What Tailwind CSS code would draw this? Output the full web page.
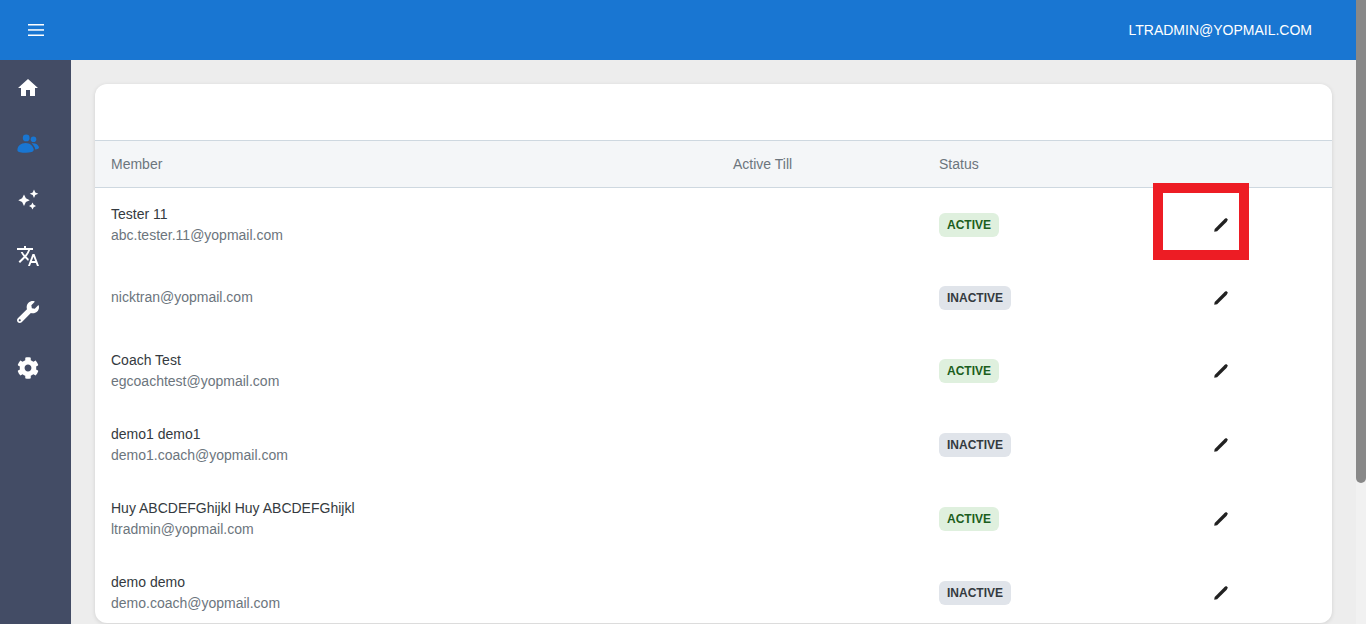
<!doctype html>
<html>
<head>
<meta charset="utf-8">
<script src="https://cdn.jsdelivr.net/npm/@tailwindcss/browser@4"></script>
</head>
<body class="h-[624px] overflow-hidden font-['Liberation_Sans',sans-serif] text-sm">
<div class="relative flex h-[624px] w-[1366px] overflow-hidden bg-[#ededed]">
  <div class="flex h-full w-[1356px] flex-col">
    <header class="flex h-[60px] shrink-0 items-center justify-between bg-[#1976d2] pl-[28px] pr-[44px] text-white">
      <svg class="h-[12px] w-[16px]" viewBox="0 0 16 12" fill="#fff"><rect y="0" width="16" height="1.5"/><rect y="5.2" width="16" height="1.5"/><rect y="10.5" width="16" height="1.5"/></svg>
      <span>LTRADMIN@YOPMAIL.COM</span>
    </header>
    <div class="flex min-h-0 flex-1">
      <aside class="flex w-[71px] shrink-0 flex-col bg-[#434c65] pl-4">
        <div class="flex h-14 w-6 items-center"><svg class="h-6 w-6" viewBox="0 0 24 24" fill="#fff"><path d="M10 20v-6h4v6h5v-8h3L12 3 2 12h3v8z"/></svg></div>
        <div class="flex h-14 w-6 items-center"><svg class="h-6 w-6" viewBox="0 0 24 24" fill="#1976d2"><circle cx="10.2" cy="5.9" r="3.4"/><circle cx="17.5" cy="7.3" r="2.8"/><path d="M1.4 18.2c0-4.3 3.6-7.2 8.2-7.2s7.4 3 8.1 6.3c.3 1.500-.9 2.500-2.200 2.800-1.700.4-3.700.6-5.700.6-4 0-8.400-.6-8.400-2.500z"/><path d="M15.500 11.300c3.600-.6 6.600 1 7.400 3.700.3 1.100-.5 1.700-1.300 2l-2.300.4c-.4-2.400-1.900-4.600-3.800-6.100z"/></svg></div>
        <div class="flex h-14 w-6 items-center"><svg class="h-6 w-6" viewBox="0 0 24 24" fill="#fff"><path d="M8 6.500l1.900 3.800 3.800 1.900-3.800 1.900L8 18l-1.900-3.900-3.800-1.900 3.800-1.900z"/><path d="M18 1.500l1.300 3 3 1.300-3 1.300-1.300 3-1.300-3-3-1.300 3-1.300z"/><path d="M16.500 14.500l1.200 2.300 2.300 1.200-2.300 1.200-1.200 2.300-1.200-2.300-2.300-1.200 2.300-1.200z"/></svg></div>
        <div class="flex h-14 w-6 items-center"><svg class="h-6 w-6" viewBox="0 0 24 24" fill="#fff"><path d="m12.870 15.070-2.540-2.510.03-.03c1.740-1.940 2.980-4.170 3.710-6.530H17V4h-7V2H8v2H1v1.990h11.170C11.500 7.920 10.440 9.750 9 11.350 8.070 10.320 7.300 9.190 6.690 8h-2c.73 1.630 1.730 3.170 2.980 4.560l-5.090 5.020L4 19l5-5 3.110 3.110zM18.500 10h-2L12 22h2l1.120-3h4.750L21 22h2zm-2.620 7 1.620-4.330L19.120 17z"/></svg></div>
        <div class="flex h-14 w-6 items-center"><svg class="ml-[1px] h-[22px] w-[22px]" viewBox="0 0 512 512" fill="#fff"><path d="M507.730 109.100c-2.240-9.030-13.540-12.090-20.120-5.510l-74.360 74.360-67.880-11.310-11.310-67.880 74.360-74.360c6.620-6.620 3.430-17.900-5.660-20.160-47.380-11.740-99.550.91-136.580 37.930-39.640 39.640-50.550 97.100-34.050 147.200L18.740 402.760c-24.990 24.990-24.990 65.510 0 90.500 24.990 24.990 65.510 24.990 90.500 0l213.210-213.210c50.120 16.710 107.470 5.680 147.370-34.220 37.070-37.070 49.700-89.320 37.910-136.730zM64 472c-13.250 0-24-10.750-24-24 0-13.260 10.750-24 24-24s24 10.740 24 24c0 13.250-10.750 24-24 24z"/></svg></div>
        <div class="flex h-14 w-6 items-center"><svg class="ml-[1px] h-[22px] w-[22px]" viewBox="0 0 512 512" fill="#fff"><path d="M487.400 315.700l-42.600-24.600c4.300-23.200 4.300-47 0-70.200l42.600-24.600c4.900-2.800 7.100-8.600 5.500-14-11.100-35.600-30-67.800-54.700-94.600-3.800-4.100-10-5.100-14.800-2.300L380.800 110c-17.900-15.400-38.500-27.300-60.800-35.100V25.800c0-5.600-3.900-10.500-9.400-11.700-36.700-8.200-74.300-7.800-109.200 0-5.500 1.200-9.400 6.100-9.400 11.700V75c-22.200 7.900-42.800 19.800-60.800 35.100L88.700 85.500c-4.900-2.800-11-1.900-14.800 2.300-24.700 26.700-43.600 58.900-54.700 94.600-1.700 5.400.6 11.200 5.500 14L67.300 221c-4.300 23.200-4.300 47 0 70.200l-42.600 24.600c-4.900 2.800-7.100 8.600-5.500 14 11.100 35.600 30 67.800 54.700 94.600 3.800 4.100 10 5.100 14.800 2.300l42.600-24.600c17.900 15.400 38.500 27.300 60.800 35.100v49.200c0 5.600 3.900 10.500 9.400 11.700 36.700 8.200 74.300 7.800 109.200 0 5.500-1.200 9.400-6.100 9.400-11.700v-49.200c22.200-7.900 42.800-19.800 60.800-35.100l42.600 24.600c4.900 2.800 11 1.900 14.800-2.300 24.700-26.700 43.600-58.900 54.700-94.600 1.500-5.500-.7-11.300-5.600-14.100zM256 336c-44.100 0-80-35.900-80-80s35.900-80 80-80 80 35.900 80 80-35.900 80-80 80z"/></svg></div>
      </aside>
      <main class="min-w-0 flex-1 px-6 pb-[1px] pt-6">
        <section class="h-full overflow-hidden rounded-xl bg-white shadow-[0_1px_4px_rgba(0,0,0,0.12)]">
          <div class="h-14"></div>
          <div class="grid h-[48px] grid-cols-[622px_206px_206px_152px] items-center border-y border-[#ced8e0] bg-[#f4f6f8] pl-4 text-[#6c757d]">
            <span>Member</span><span>Active Till</span><span>Status</span><span></span>
          </div>

          <div class="grid h-[73px] grid-cols-[622px_206px_206px_152px] items-center pl-4">
            <div class="leading-[21px]"><div class="text-[#343a40]">Tester 11</div><div class="text-[#6c757d]">abc.tester.11@yopmail.com</div></div>
            <div></div>
            <div><span class="inline-block h-6 rounded-md bg-[#dff0de] px-2 text-xs font-bold leading-6 text-[#1b5e20]">ACTIVE</span></div>
            <div class="flex justify-center"><svg class="h-[14px] w-[14px]" viewBox="0 0 14 14" fill="#212121"><path d="M0.200 13.800 0.700 10.900 10.600 1 13 3.400 3.100 13.300z"/><path d="M11.200.6 11.800.2h.8l1 1 .2.800-.4.6-.9.9-2.300-2.300z"/></svg></div>
          </div>
          <div class="grid h-[73px] grid-cols-[622px_206px_206px_152px] items-center pl-4">
            <div class="leading-[21px]"><div class="text-[#6c757d]">nicktran@yopmail.com</div></div>
            <div></div>
            <div><span class="inline-block h-6 rounded-md bg-[#e0e4ea] px-2 text-xs font-bold leading-6 text-[#343a40]">INACTIVE</span></div>
            <div class="flex justify-center"><svg class="h-[14px] w-[14px]" viewBox="0 0 14 14" fill="#212121"><path d="M0.200 13.800 0.700 10.900 10.600 1 13 3.400 3.100 13.300z"/><path d="M11.200.6 11.800.2h.8l1 1 .2.800-.4.6-.9.9-2.300-2.300z"/></svg></div>
          </div>
          <div class="grid h-[74px] grid-cols-[622px_206px_206px_152px] items-center pl-4">
            <div class="leading-[21px]"><div class="text-[#343a40]">Coach Test</div><div class="text-[#6c757d]">egcoachtest@yopmail.com</div></div>
            <div></div>
            <div><span class="inline-block h-6 rounded-md bg-[#dff0de] px-2 text-xs font-bold leading-6 text-[#1b5e20]">ACTIVE</span></div>
            <div class="flex justify-center"><svg class="h-[14px] w-[14px]" viewBox="0 0 14 14" fill="#212121"><path d="M0.200 13.800 0.700 10.900 10.600 1 13 3.400 3.100 13.300z"/><path d="M11.200.6 11.800.2h.8l1 1 .2.800-.4.6-.9.9-2.300-2.300z"/></svg></div>
          </div>
          <div class="grid h-[74px] grid-cols-[622px_206px_206px_152px] items-center pl-4">
            <div class="leading-[21px]"><div class="text-[#343a40]">demo1 demo1</div><div class="text-[#6c757d]">demo1.coach@yopmail.com</div></div>
            <div></div>
            <div><span class="inline-block h-6 rounded-md bg-[#e0e4ea] px-2 text-xs font-bold leading-6 text-[#343a40]">INACTIVE</span></div>
            <div class="flex justify-center"><svg class="h-[14px] w-[14px]" viewBox="0 0 14 14" fill="#212121"><path d="M0.200 13.800 0.700 10.900 10.600 1 13 3.400 3.100 13.300z"/><path d="M11.200.6 11.800.2h.8l1 1 .2.800-.4.6-.9.9-2.300-2.300z"/></svg></div>
          </div>
          <div class="grid h-[74px] grid-cols-[622px_206px_206px_152px] items-center pl-4">
            <div class="leading-[21px]"><div class="text-[#343a40]">Huy ABCDEFGhijkl Huy ABCDEFGhijkl</div><div class="text-[#6c757d]">ltradmin@yopmail.com</div></div>
            <div></div>
            <div><span class="inline-block h-6 rounded-md bg-[#dff0de] px-2 text-xs font-bold leading-6 text-[#1b5e20]">ACTIVE</span></div>
            <div class="flex justify-center"><svg class="h-[14px] w-[14px]" viewBox="0 0 14 14" fill="#212121"><path d="M0.200 13.800 0.700 10.900 10.600 1 13 3.400 3.100 13.300z"/><path d="M11.200.6 11.800.2h.8l1 1 .2.800-.4.6-.9.9-2.300-2.300z"/></svg></div>
          </div>
          <div class="grid h-[74px] grid-cols-[622px_206px_206px_152px] items-center pl-4">
            <div class="leading-[21px]"><div class="text-[#343a40]">demo demo</div><div class="text-[#6c757d]">demo.coach@yopmail.com</div></div>
            <div></div>
            <div><span class="inline-block h-6 rounded-md bg-[#e0e4ea] px-2 text-xs font-bold leading-6 text-[#343a40]">INACTIVE</span></div>
            <div class="flex justify-center"><svg class="h-[14px] w-[14px]" viewBox="0 0 14 14" fill="#212121"><path d="M0.200 13.800 0.700 10.900 10.600 1 13 3.400 3.100 13.300z"/><path d="M11.200.6 11.800.2h.8l1 1 .2.800-.4.6-.9.9-2.300-2.300z"/></svg></div>
          </div>
        </section>
      </main>
    </div>
  </div>
  <div class="h-full w-[10px] shrink-0 bg-[#f1f1f1]"><div class="h-[483px] rounded-b-[5px] bg-[#888]"></div></div>
  <div class="absolute left-[1153px] top-[183px] h-[77px] w-[96px] border-[10px] border-[#ed1c24]"></div>
</div>
</body>
</html>
